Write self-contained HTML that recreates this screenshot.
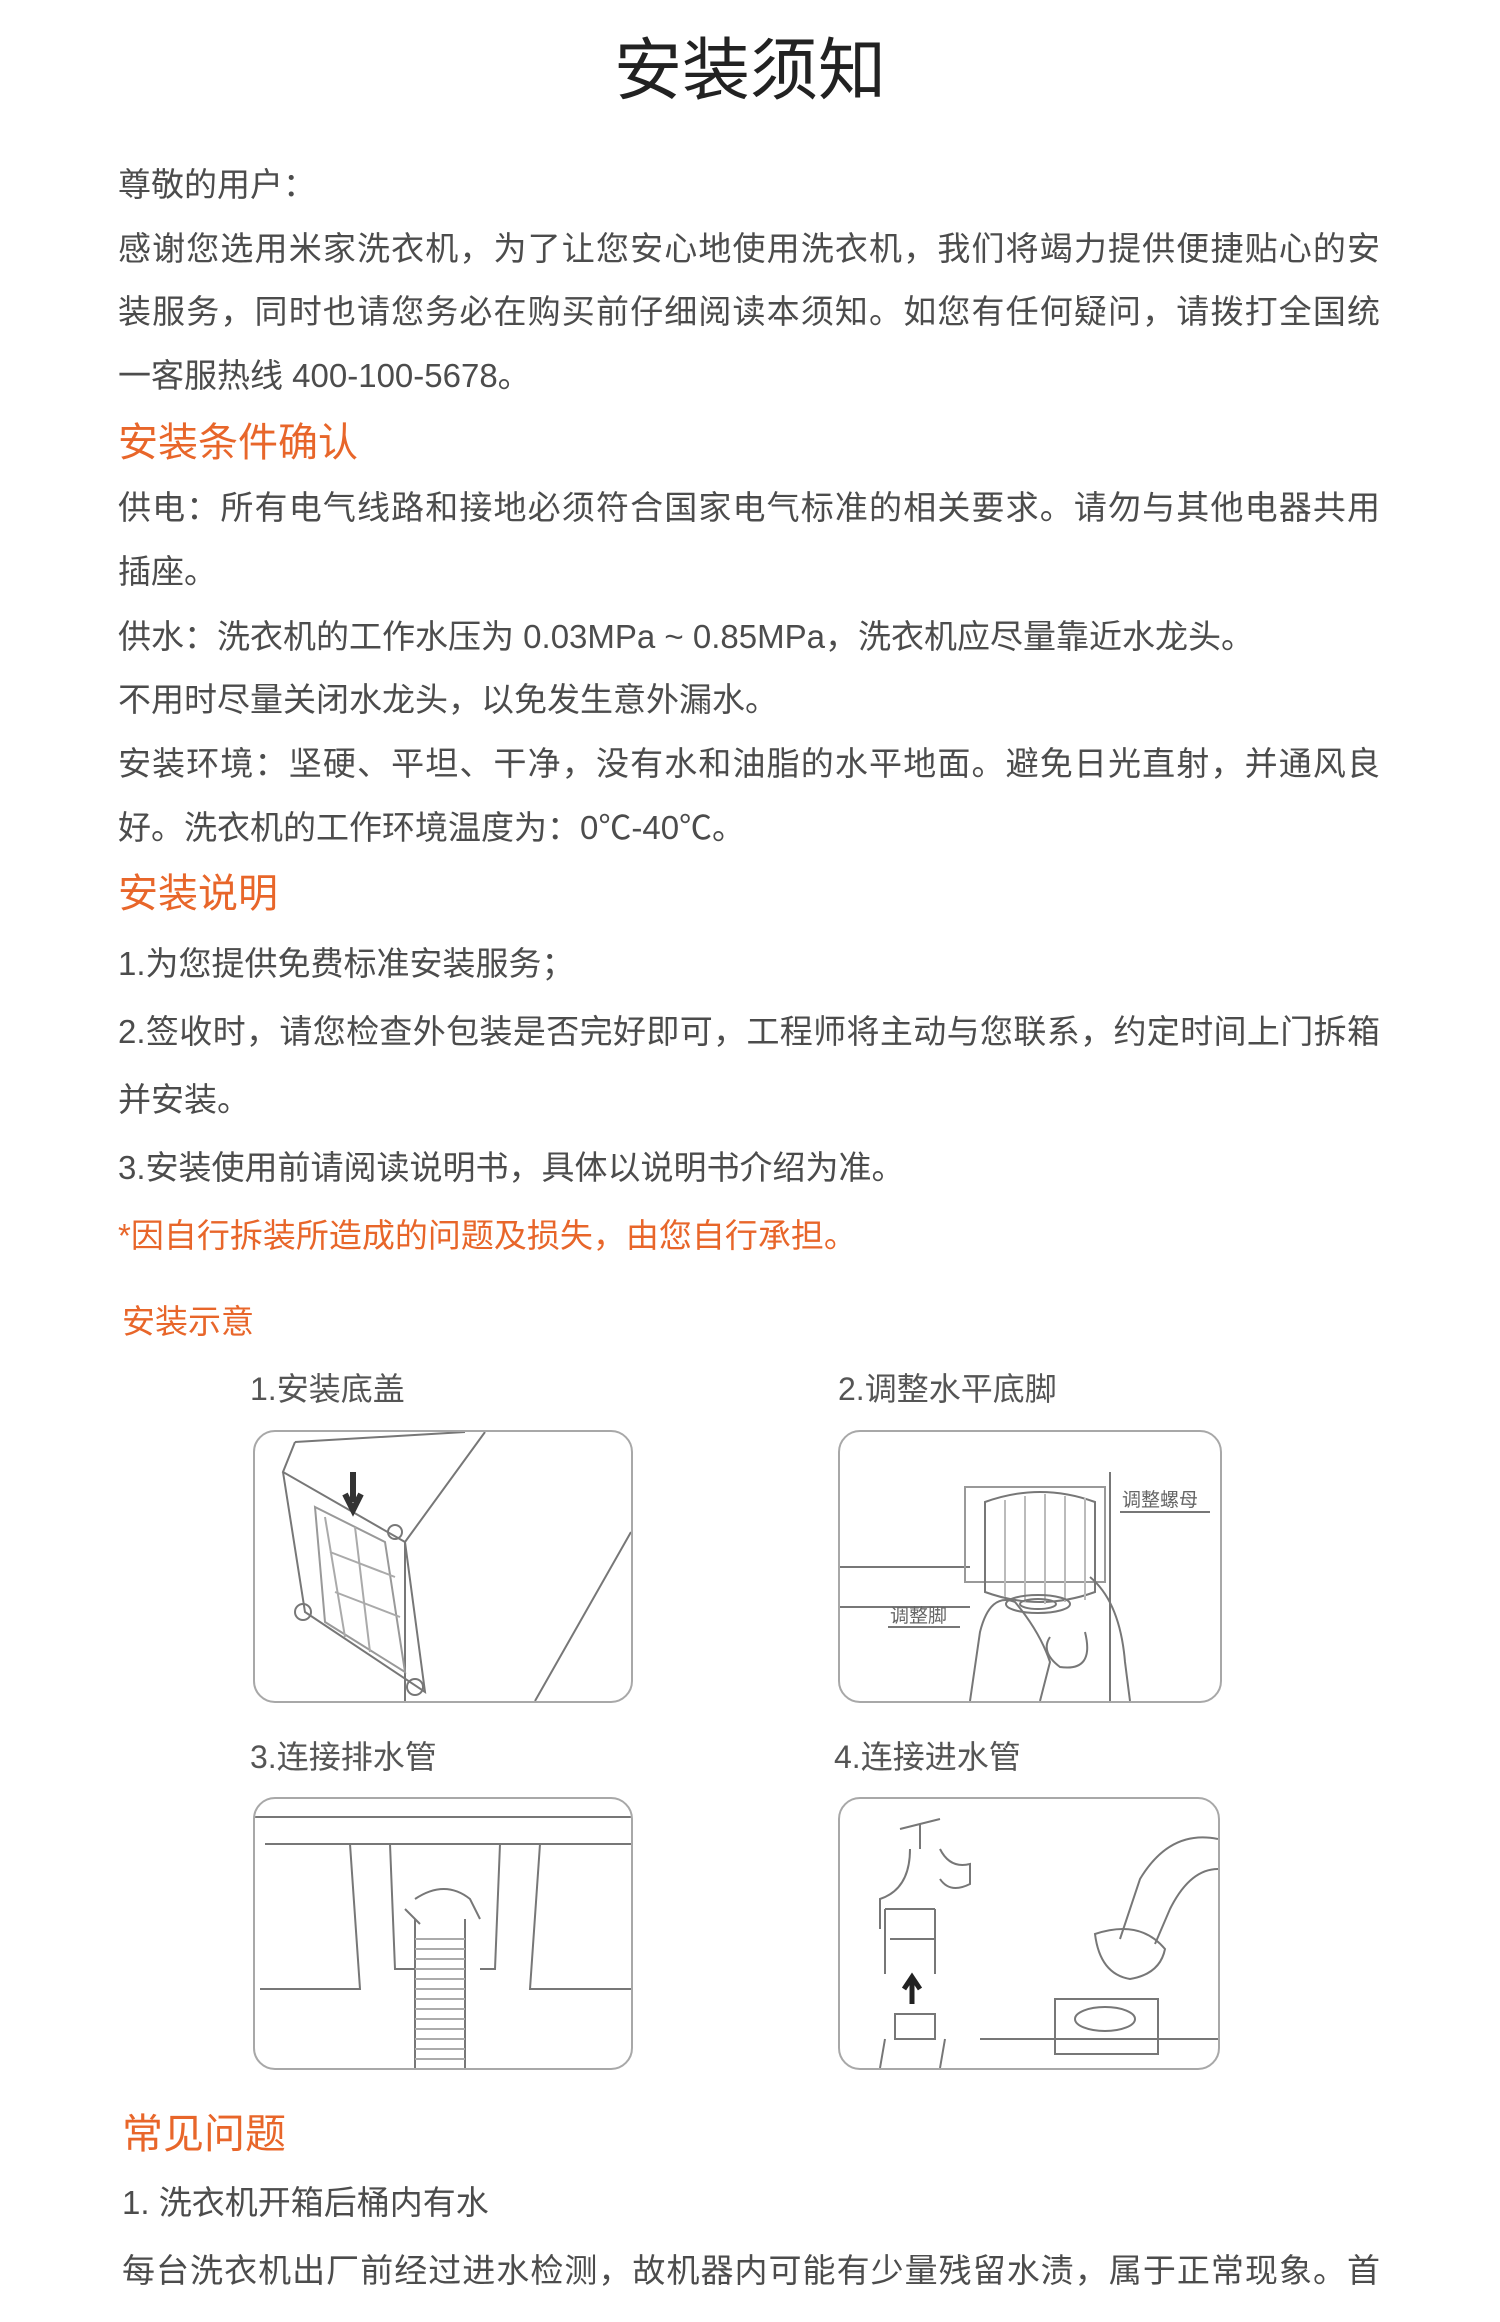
<!DOCTYPE html>
<html><head><meta charset="utf-8"><style>
html,body{margin:0;padding:0;background:#fff;}
body{width:1500px;height:2322px;position:relative;overflow:hidden;font-family:"Liberation Sans","Noto Sans CJK SC",sans-serif;color:#4c4c4c;}
.t{position:absolute;left:118px;white-space:nowrap;font-size:33px;line-height:40px;height:40px;}
.f{width:1262px;text-align:justify;text-align-last:justify;white-space:normal;}
.h{position:absolute;left:118px;white-space:nowrap;color:#e8662a;font-size:40px;line-height:44px;}
.box{position:absolute;border:2px solid #a8a8a8;border-radius:22px;overflow:hidden;background:#fff;}
.lab{position:absolute;font-size:32px;line-height:40px;color:#555;white-space:nowrap;}
svg{position:absolute;left:0;top:0;}
</style></head><body>
<div style="position:absolute;left:0;width:1500px;top:34px;text-align:center;font-size:68px;line-height:74px;color:#222;">安装须知</div>

<div class="t" style="top:165px">尊敬的用户：</div>
<div class="t f" style="top:229px">感谢您选用米家洗衣机，为了让您安心地使用洗衣机，我们将竭力提供便捷贴心的安</div>
<div class="t f" style="top:292px">装服务，同时也请您务必在购买前仔细阅读本须知。如您有任何疑问，请拨打全国统</div>
<div class="t" style="top:356px">一客服热线 400-100-5678。</div>
<div class="h" style="top:421px">安装条件确认</div>
<div class="t f" style="top:488px">供电：所有电气线路和接地必须符合国家电气标准的相关要求。请勿与其他电器共用</div>
<div class="t" style="top:552px">插座。</div>
<div class="t" style="top:617px">供水：洗衣机的工作水压为 0.03MPa ~ 0.85MPa，洗衣机应尽量靠近水龙头。</div>
<div class="t" style="top:680px">不用时尽量关闭水龙头，以免发生意外漏水。</div>
<div class="t f" style="top:744px">安装环境：坚硬、平坦、干净，没有水和油脂的水平地面。避免日光直射，并通风良</div>
<div class="t" style="top:808px">好。洗衣机的工作环境温度为：0℃-40℃。</div>
<div class="h" style="top:872px">安装说明</div>
<div class="t" style="top:944px">1.为您提供免费标准安装服务；</div>
<div class="t f" style="top:1012px">2.签收时，请您检查外包装是否完好即可，工程师将主动与您联系，约定时间上门拆箱</div>
<div class="t" style="top:1080px">并安装。</div>
<div class="t" style="top:1148px">3.安装使用前请阅读说明书，具体以说明书介绍为准。</div>
<div class="t" style="top:1216px;color:#e8662a">*因自行拆装所造成的问题及损失，由您自行承担。</div>
<div class="h" style="top:1300px;left:122px;font-size:33px;">安装示意</div>

<div class="lab" style="left:250px;top:1369px">1.安装底盖</div>
<div class="lab" style="left:838px;top:1369px">2.调整水平底脚</div>
<div class="lab" style="left:250px;top:1737px">3.连接排水管</div>
<div class="lab" style="left:834px;top:1737px">4.连接进水管</div>

<div class="box" style="left:253px;top:1430px;width:376px;height:269px">
<svg width="376" height="269" fill="none" stroke="#777" stroke-width="2">
<path d="M40 10 L210 0 M230 0 L150 110 L150 280 M376 100 L280 269"/>
<path d="M40 10 L28 40 L150 110 M28 40 L50 180 L170 260 L150 110"/>
<path d="M60 75 L130 110 L150 240 L70 190 Z" stroke="#999"/>
<path d="M70 85 L90 205 M100 95 L115 220 M75 120 L140 145 M80 160 L145 185" stroke="#aaa"/>
<path d="M98 40 L98 70 M90 62 L98 78 L106 62" stroke="#333" stroke-width="6"/>
<circle cx="48" cy="180" r="8"/><circle cx="160" cy="255" r="8"/><circle cx="140" cy="100" r="7"/>
</svg></div>

<div class="box" style="left:838px;top:1430px;width:380px;height:269px">
<svg width="380" height="269" fill="none" stroke="#777" stroke-width="2">
<path d="M0 135 L130 135 M0 175 L130 175 M270 40 L270 269"/>
<path d="M125 55 L265 55 L265 150 L125 150 Z" stroke="#999"/>
<path d="M145 70 Q200 50 255 70 L255 160 Q200 180 145 160 Z"/>
<path d="M165 68 V165 M185 64 V170 M205 62 V172 M225 64 V170 M245 66 V168" stroke="#bbb"/>
<ellipse cx="198" cy="172" rx="32" ry="9"/><ellipse cx="198" cy="172" rx="18" ry="5"/>
<path d="M130 269 L140 200 Q150 160 175 170 Q200 200 210 230 L200 269 M250 145 Q280 170 285 230 L290 269"/>
<path d="M245 200 Q255 240 220 235 Q200 220 210 205"/>
<path d="M280 80 L370 80 M48 195 L120 195"/>
<text x="282" y="74" font-size="19" fill="#666" stroke="none" font-family="Noto Sans CJK SC,sans-serif">调整螺母</text>
<text x="50" y="190" font-size="19" fill="#666" stroke="none" font-family="Noto Sans CJK SC,sans-serif">调整脚</text>
</svg></div>

<div class="box" style="left:253px;top:1797px;width:376px;height:269px">
<svg width="376" height="269" fill="none" stroke="#777" stroke-width="2">
<path d="M0 18 L376 18 M10 45 L376 45"/>
<path d="M95 45 L105 190 L5 190 M135 45 L140 170 L160 170 M245 45 L240 170 L225 170 M285 45 L275 190 L376 190"/>
<path d="M160 100 Q190 80 215 100 L225 120 M150 110 L165 125"/>
<path d="M160 120 L160 269 M210 120 L210 269"/>
<path d="M160 140 H210 M160 150 H210 M160 160 H210 M160 170 H210 M160 180 H210 M160 190 H210 M160 200 H210 M160 210 H210 M160 220 H210 M160 230 H210 M160 240 H210 M160 250 H210 M160 260 H210" stroke="#aaa"/>
</svg></div>

<div class="box" style="left:838px;top:1797px;width:378px;height:269px">
<svg width="378" height="269" fill="none" stroke="#777" stroke-width="2">
<path d="M60 30 L100 20 M80 25 L80 50 M70 50 Q70 90 40 100 L40 130 M100 50 Q110 70 130 65 L130 85 Q110 95 100 80 M45 110 H95 M50 140 H95 M45 110 V175 M95 110 V175"/>
<path d="M72 180 V205 M64 190 L72 178 L80 190" stroke="#222" stroke-width="5"/>
<path d="M55 215 H95 V240 H55 Z M40 269 L45 240 M100 269 L105 240"/>
<path d="M378 40 Q330 30 300 80 Q290 110 280 140 M378 70 Q350 70 330 110 L315 145"/>
<path d="M255 135 Q300 120 325 150 Q320 175 290 180 Q260 175 255 135 Z"/>
<path d="M215 200 H318 V255 H215 Z"/>
<ellipse cx="265" cy="220" rx="30" ry="12"/>
<path d="M140 240 H378"/>
</svg></div>

<div class="h" style="top:2112px;left:122px;font-size:41px;">常见问题</div>
<div class="t" style="top:2183px;left:122px">1. 洗衣机开箱后桶内有水</div>
<div class="t f" style="top:2251px;left:122px;width:1258px">每台洗衣机出厂前经过进水检测，故机器内可能有少量残留水渍，属于正常现象。首</div>
</body></html>
